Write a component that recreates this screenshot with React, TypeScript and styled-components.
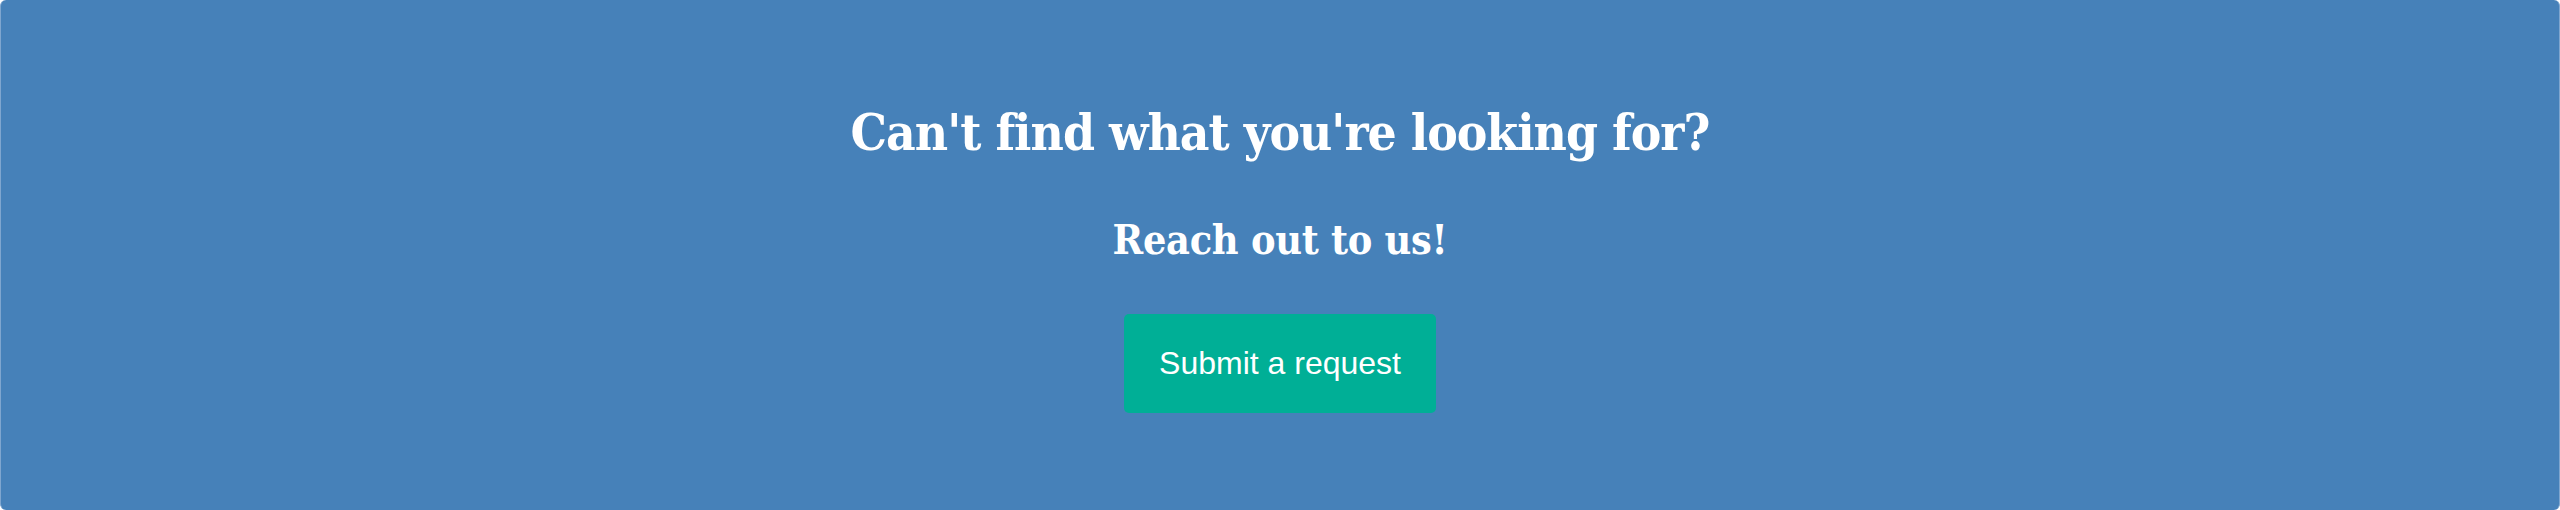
import React from "react";
import styled, { createGlobalStyle } from "styled-components";

const GlobalStyle = createGlobalStyle`
  html, body {
    margin: 0;
    padding: 0;
    background: #ffffff;
  }
  * { box-sizing: border-box; }
`;

const Panel = styled.section`
  width: 2560px;
  height: 510px;
  background: #4681b9;
  border-radius: 6px;
  border-left: 1px solid #7fa6cf;
  border-right: 1px solid #7fa6cf;
  display: flex;
  flex-direction: column;
  align-items: center;
  padding-top: 102px;
  color: #ffffff;
`;

const Title = styled.h2<{ $size: number; $gap: number; $spacing: number }>`
  margin: ${(p) => p.$gap}px 0 0;
  font-family: "DejaVu Serif Condensed", "DejaVu Serif", serif;
  font-stretch: condensed;
  font-weight: bold;
  font-size: ${(p) => p.$size}px;
  line-height: 1.2;
  letter-spacing: ${(p) => p.$spacing}px;
  color: #ffffff;
`;

const RequestButton = styled.a`
  margin-top: 49px;
  height: 99px;
  padding: 0 35px;
  display: flex;
  align-items: center;
  justify-content: center;
  background: #00af96;
  border-radius: 5px;
  font-family: "Liberation Sans", Arial, sans-serif;
  font-size: 32px;
  color: #ffffff;
  text-decoration: none;
  cursor: pointer;
`;

export default function App() {
  return (
    <>
      <GlobalStyle />
      <Panel>
        <Title $size={51} $gap={0} $spacing={-1}>
          Can't find what you're looking for?
        </Title>
        <Title $size={41} $gap={53} $spacing={-0.3}>
          Reach out to us!
        </Title>
        <RequestButton>Submit a request</RequestButton>
      </Panel>
    </>
  );
}
